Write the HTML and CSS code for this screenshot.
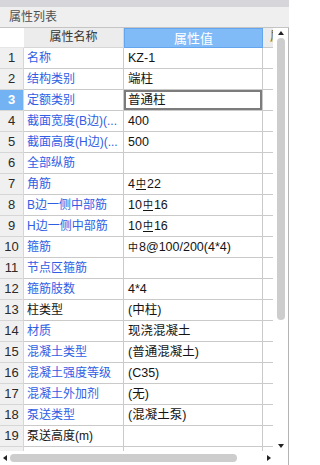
FILE: index.html
```html
<!DOCTYPE html>
<html lang="zh">
<head>
<meta charset="utf-8">
<title>属性列表</title>
<link rel="stylesheet" href="styles.css">
</head>
<body>
<div class="panel">
  <div class="topstrip"></div>
  <div class="title">属性列表</div>
  <div class="area">
    <div class="left">
      <div class="row head">
        <div class="c num"></div>
        <div class="c name">属性名称</div>
        <div class="c val">属性值</div>
        <div class="c extra"><span class="cut">属</span></div>
      </div>
      <div class="row"><div class="c num">1</div><div class="c name blue">名称</div><div class="c val">KZ-1</div><div class="c extra"></div></div>
      <div class="row"><div class="c num">2</div><div class="c name blue">结构类别</div><div class="c val">端柱</div><div class="c extra"></div></div>
      <div class="row"><div class="c num sel">3</div><div class="c name blue">定额类别</div><div class="c val selval">普通柱</div><div class="c extra"></div></div>
      <div class="row"><div class="c num">4</div><div class="c name blue">截面宽度(B边)(...</div><div class="c val">400</div><div class="c extra"></div></div>
      <div class="row"><div class="c num">5</div><div class="c name blue">截面高度(H边)(...</div><div class="c val">500</div><div class="c extra"></div></div>
      <div class="row"><div class="c num">6</div><div class="c name blue">全部纵筋</div><div class="c val"></div><div class="c extra"></div></div>
      <div class="row"><div class="c num">7</div><div class="c name blue">角筋</div><div class="c val">4<span class="bar">中</span>22</div><div class="c extra"></div></div>
      <div class="row"><div class="c num">8</div><div class="c name blue">B边一侧中部筋</div><div class="c val">10<span class="bar">中</span>16</div><div class="c extra"></div></div>
      <div class="row"><div class="c num">9</div><div class="c name blue">H边一侧中部筋</div><div class="c val">10<span class="bar">中</span>16</div><div class="c extra"></div></div>
      <div class="row"><div class="c num">10</div><div class="c name blue">箍筋</div><div class="c val"><span class="phi">中</span>8@100/200(4*4)</div><div class="c extra"></div></div>
      <div class="row"><div class="c num">11</div><div class="c name blue">节点区箍筋</div><div class="c val"></div><div class="c extra"></div></div>
      <div class="row"><div class="c num">12</div><div class="c name blue">箍筋肢数</div><div class="c val">4*4</div><div class="c extra"></div></div>
      <div class="row"><div class="c num">13</div><div class="c name">柱类型</div><div class="c val">(中柱)</div><div class="c extra"></div></div>
      <div class="row"><div class="c num">14</div><div class="c name blue">材质</div><div class="c val">现浇混凝土</div><div class="c extra"></div></div>
      <div class="row"><div class="c num">15</div><div class="c name blue">混凝土类型</div><div class="c val">(普通混凝土)</div><div class="c extra"></div></div>
      <div class="row"><div class="c num">16</div><div class="c name blue">混凝土强度等级</div><div class="c val">(C35)</div><div class="c extra"></div></div>
      <div class="row"><div class="c num">17</div><div class="c name blue">混凝土外加剂</div><div class="c val">(无)</div><div class="c extra"></div></div>
      <div class="row"><div class="c num">18</div><div class="c name blue">泵送类型</div><div class="c val">(混凝土泵)</div><div class="c extra"></div></div>
      <div class="row"><div class="c num">19</div><div class="c name">泵送高度(m)</div><div class="c val"></div><div class="c extra"></div></div>
      <div class="row partial"><div class="c num"></div><div class="c name"></div><div class="c val"></div><div class="c extra"></div></div>
      <div class="hscroll">
        <span class="arrow-left"></span>
        <span class="hthumb"></span>
        <span class="arrow-right"></span>
      </div>
    </div>
    <div class="vscroll">
      <span class="arrow-up"></span>
      <span class="vthumb"></span>
      <span class="vspace"></span>
      <span class="arrow-down"></span>
      <span class="corner"></span>
    </div>
  </div>
</div>
</body>
</html>
```

FILE: styles.css
```css
html, body {
  margin: 0;
  padding: 0;
  background: #ffffff;
}
body {
  width: 293px;
  height: 465px;
  overflow: hidden;
  font-family: "Liberation Sans", "Noto Sans CJK SC", sans-serif;
  font-size: 12px;
  color: #141414;
}
.panel {
  width: 289px;
  height: 465px;
  display: flex;
  flex-direction: column;
}
.topstrip {
  height: 7px;
  background: #d6d6da;
}
.title {
  height: 20px;
  line-height: 20px;
  padding-left: 9px;
  background: #efefef;
  color: #505050;
  border-bottom: 1px solid #c4c4c4;
  font-size: 12px;
}
.area {
  display: flex;
  flex: 1;
  border-right: 1px solid #b4b4b4;
}
.left {
  width: 273px;
  display: flex;
  flex-direction: column;
  overflow: hidden;
}
.row {
  display: grid;
  grid-template-columns: 24px 100px 139px 10px;
  height: 21px;
  flex: none;
}
.c {
  box-sizing: border-box;
  border-bottom: 1px solid #cacaca;
  border-right: 1px solid #cacaca;
  white-space: nowrap;
  overflow: hidden;
  line-height: 20px;
}
.c.extra {
  border-right: none;
}
.num {
  background: #f0f0f0;
  text-align: center;
  font-size: 13px;
  color: #2a2a2a;
  border-color: #d6d6d6;
}
.num.sel {
  background: #74b3f3;
  color: #ffffff;
  font-weight: bold;
}
.name {
  padding-left: 3px;
}
.blue {
  color: #2f5ee4;
}
.val {
  padding-left: 4px;
  font-size: 12.5px;
}
.selval {
  box-shadow: inset 0 0 0 2px #7c7c7c;
}
.bar {
  display: inline-block;
  font-size: 10px;
  line-height: 10px;
  border-bottom: 1px solid #141414;
  margin: 0 1px;
  vertical-align: 1px;
}
.phi {
  font-size: 10px;
  margin-right: 1px;
}
.head {
  height: 20px;
}
.head .c {
  line-height: 19px;
  text-align: center;
  color: #333333;
  font-size: 12px;
}
.head .num {
  background: #ffffff;
  border-right: none;
  border-bottom: 1px solid #e6e6e6;
}
.head .name {
  background: #ececec;
  padding-left: 0;
  border-color: #d6d6d6;
}
.head .val {
  background: #80bbf8;
  color: #ffffff;
  border: 1px solid #64a6ee;
  padding-left: 0;
  font-size: 13px;
}
.head .extra {
  background: #ececec;
  text-align: left;
  padding-left: 7px;
}
.cut {
  display: inline-block;
  width: 3px;
  overflow: hidden;
  vertical-align: top;
  color: #6a5a2a;
}
.partial {
  height: 4px;
}
.partial .c {
  border-bottom: none;
}
.hscroll {
  height: 14px;
  display: flex;
  align-items: center;
  background: #ffffff;
  flex: none;
}
.arrow-left {
  width: 0;
  height: 0;
  margin-left: 3px;
  border-top: 3px solid transparent;
  border-bottom: 3px solid transparent;
  border-right: 4px solid #222222;
}
.hthumb {
  width: 227px;
  height: 8px;
  margin-left: 3px;
  border-radius: 4px;
  background: #cdcdcd;
}
.arrow-right {
  width: 0;
  height: 0;
  margin-left: 30px;
  border-top: 3.5px solid transparent;
  border-bottom: 3.5px solid transparent;
  border-left: 4px solid #222222;
}
.vscroll {
  width: 15px;
  display: flex;
  flex-direction: column;
  align-items: center;
}
.arrow-up {
  width: 0;
  height: 0;
  margin-top: 3px;
  border-left: 3.5px solid transparent;
  border-right: 3.5px solid transparent;
  border-bottom: 4px solid #222222;
}
.vthumb {
  width: 8px;
  height: 282px;
  margin-top: 3px;
  border-radius: 4px;
  background: #cdcdcd;
}
.vspace {
  flex: 1;
}
.arrow-down {
  width: 0;
  height: 0;
  border-left: 3.5px solid transparent;
  border-right: 3.5px solid transparent;
  border-top: 4px solid #222222;
  margin-bottom: 3px;
}
.corner {
  height: 14px;
}
```
